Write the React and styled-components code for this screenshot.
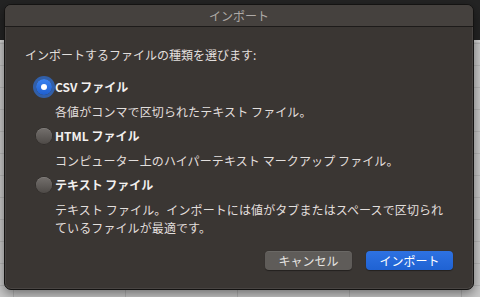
import React, { useState } from "react";
import styled, { createGlobalStyle } from "styled-components";

const GlobalStyle = createGlobalStyle`
    html, body {
        margin: 0;
        padding: 0;
    }
    body {
        font-family: "Noto Sans CJK JP", "Noto Sans", sans-serif;
        -webkit-font-smoothing: antialiased;
    }
`;

const Page = styled.div`
    width: 480px;
    height: 297px;
    box-sizing: border-box;
    padding: 4px 6px 7px 4px;
    overflow: hidden;
    background:
        linear-gradient(#242424 0 40px, #d9d9d9 40px 42px, transparent 42px),
        repeating-linear-gradient(90deg, transparent 0 13px, #b4b4b4 13px 14px, transparent 14px 112px),
        repeating-linear-gradient(180deg, #c9c9c9 0 21px, #b8b8b8 21px 22px);
`;

const Dialog = styled.div`
    width: 470px;
    height: 286px;
    box-sizing: border-box;
    display: flex;
    flex-direction: column;
    background: #3a3633;
    border-radius: 7px;
    border: 1px solid #141312;
    box-shadow: inset 0 0 0 1px rgba(255, 255, 255, 0.08), 0 4px 12px rgba(0, 0, 0, 0.45);
    overflow: hidden;
`;

const TitleBar = styled.div`
    height: 21px;
    flex-shrink: 0;
    display: flex;
    align-items: center;
    justify-content: center;
    background: #45413e;
    border-bottom: 1px solid #1d1b1a;
    color: #aeaaa7;
    font-size: 12px;
`;

const Body = styled.div`
    flex: 1;
    display: flex;
    flex-direction: column;
    padding: 19px 20px 0 20px;
    color: #e2dfdd;
    font-size: 12px;
    line-height: 18px;
`;

const Heading = styled.div`
    letter-spacing: 0;
`;

const Options = styled.div`
    display: flex;
    flex-direction: column;
    margin-top: 8px;
`;

const Option = styled.label`
    display: flex;
    flex-direction: column;
    margin-top: 6px;
    cursor: default;
`;

const RadioRow = styled.div`
    display: flex;
    align-items: center;
    height: 18px;
    padding-left: 11px;
`;

const Radio = styled.span`
    position: relative;
    width: 16px;
    height: 16px;
    border-radius: 50%;
    box-sizing: border-box;
    flex-shrink: 0;
    margin-right: 3px;
    background: ${(p) =>
        p.$checked
            ? "linear-gradient(#3a82f0, #1f5fd0)"
            : "linear-gradient(#74706d, #4e4a47)"};
    box-shadow: ${(p) =>
        p.$checked
            ? "0 0 0 3px rgba(47, 110, 210, 0.75)"
            : "inset 0 0.5px 0 rgba(255,255,255,0.2), 0 0 0 0.5px rgba(0,0,0,0.3)"};

    &::after {
        content: "";
        display: ${(p) => (p.$checked ? "block" : "none")};
        position: absolute;
        left: 5px;
        top: 5px;
        width: 6px;
        height: 6px;
        border-radius: 50%;
        background: #ffffff;
    }
`;

const OptionTitle = styled.span`
    font-weight: 700;
    color: #f2f0ef;
    letter-spacing: 0;
`;

const Desc = styled.div`
    margin-top: 7px;
    padding-left: 30px;
    padding-right: 4px;
    letter-spacing: 0.1px;
    line-height: 18px;
`;

const Footer = styled.div`
    display: flex;
    justify-content: flex-end;
    gap: 14px;
    margin-top: 14px;
`;

const Button = styled.button`
    width: 87px;
    height: 19px;
    padding: 0;
    border: none;
    border-radius: 4px;
    font-family: inherit;
    font-size: 12px;
    line-height: 19px;
    color: ${(p) => (p.$primary ? "#ffffff" : "#e6e4e2")};
    background: ${(p) =>
        p.$primary ? "linear-gradient(#2e72e2, #1f62d3)" : "#5f5c59"};
    box-shadow: ${(p) =>
        p.$primary
            ? "0 0.5px 1px rgba(0,0,0,0.4)"
            : "inset 0 0.5px 0 rgba(255,255,255,0.15), 0 0.5px 1px rgba(0,0,0,0.4)"};
    cursor: default;
`;

const options = [
    {
        id: "csv",
        title: "CSV ファイル",
        desc: "各値がコンマで区切られたテキスト ファイル。",
    },
    {
        id: "html",
        title: "HTML ファイル",
        desc: "コンピューター上のハイパーテキスト マークアップ ファイル。",
    },
    {
        id: "text",
        title: "テキスト ファイル",
        desc: "テキスト ファイル。インポートには値がタブまたはスペースで区切られているファイルが最適です。",
    },
];

const App = () => {
    const [selected, setSelected] = useState("csv");

    return (
        <Page>
            <GlobalStyle />
            <Dialog>
                <TitleBar>インポート</TitleBar>
                <Body>
                    <Heading>インポートするファイルの種類を選びます:</Heading>
                    <Options>
                        {options.map((o) => (
                            <Option key={o.id} onClick={() => setSelected(o.id)}>
                                <RadioRow>
                                    <Radio $checked={selected === o.id} />
                                    <OptionTitle>{o.title}</OptionTitle>
                                </RadioRow>
                                <Desc>{o.desc}</Desc>
                            </Option>
                        ))}
                    </Options>
                    <Footer>
                        <Button>キャンセル</Button>
                        <Button $primary>インポート</Button>
                    </Footer>
                </Body>
            </Dialog>
        </Page>
    );
};

export default App;
